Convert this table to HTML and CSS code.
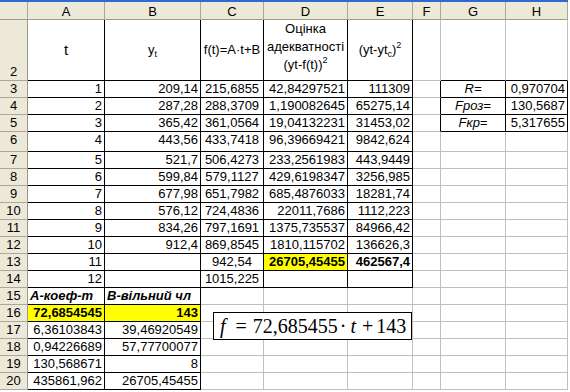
FILE: index.html
```html
<!DOCTYPE html>
<html lang="uk">
<head>
<meta charset="utf-8">
<title>Sheet</title>
<link rel="stylesheet" href="styles.css">
</head>
<body>
<div class="sheet">
  <div class="bar"></div>

  <div class="hd corner"></div>
  <div class="hd">A</div><div class="hd">B</div><div class="hd">C</div><div class="hd">D</div>
  <div class="hd">E</div><div class="hd">F</div><div class="hd">G</div><div class="hd">H</div>

  <div class="rh rh2">2</div>
  <div class="c k m r2"><span class="big">t</span></div>
  <div class="c k m r2"><span>y<sub>t</sub></span></div>
  <div class="c k m r2">f(t)=A·t+B</div>
  <div class="c k m r2"><span class="wrap">Оцінка<br>адекватності<br>(yt-f(t))<sup>2</sup></span></div>
  <div class="c k m r2"><span>(yt-yt<sub>c</sub>)<sup>2</sup></span></div>
  <div class="c"></div>
  <div class="c kb"></div>
  <div class="c kb"></div>

  <div class="rh">3</div>
  <div class="c k r">1</div><div class="c k r">209,14</div><div class="c k m">215,6855</div>
  <div class="c k r">42,84297521</div><div class="c k r">111309</div>
  <div class="c kr"></div><div class="c k m i">R=</div><div class="c k r">0,970704</div>

  <div class="rh">4</div>
  <div class="c k r">2</div><div class="c k r">287,28</div><div class="c k m">288,3709</div>
  <div class="c k r">1,190082645</div><div class="c k r">65275,14</div>
  <div class="c kr"></div><div class="c k m i">Fроз=</div><div class="c k r">130,5687</div>

  <div class="rh">5</div>
  <div class="c k r">3</div><div class="c k r">365,42</div><div class="c k m">361,0564</div>
  <div class="c k r">19,04132231</div><div class="c k r">31453,02</div>
  <div class="c kr"></div><div class="c k m i">Fкр=</div><div class="c k r">5,317655</div>

  <div class="rh">6</div>
  <div class="c k r">4</div><div class="c k r">443,56</div><div class="c k m">433,7418</div>
  <div class="c k r">96,39669421</div><div class="c k r">9842,624</div>
  <div class="c"></div><div class="c"></div><div class="c"></div>

  <div class="rh">7</div>
  <div class="c k r">5</div><div class="c k r">521,7</div><div class="c k m">506,4273</div>
  <div class="c k r">233,2561983</div><div class="c k r">443,9449</div>
  <div class="c"></div><div class="c"></div><div class="c"></div>

  <div class="rh">8</div>
  <div class="c k r">6</div><div class="c k r">599,84</div><div class="c k m">579,1127</div>
  <div class="c k r">429,6198347</div><div class="c k r">3256,985</div>
  <div class="c"></div><div class="c"></div><div class="c"></div>

  <div class="rh">9</div>
  <div class="c k r">7</div><div class="c k r">677,98</div><div class="c k m">651,7982</div>
  <div class="c k r">685,4876033</div><div class="c k r">18281,74</div>
  <div class="c"></div><div class="c"></div><div class="c"></div>

  <div class="rh">10</div>
  <div class="c k r">8</div><div class="c k r">576,12</div><div class="c k m">724,4836</div>
  <div class="c k r">22011,7686</div><div class="c k r">1112,223</div>
  <div class="c"></div><div class="c"></div><div class="c"></div>

  <div class="rh">11</div>
  <div class="c k r">9</div><div class="c k r">834,26</div><div class="c k m">797,1691</div>
  <div class="c k r">1375,735537</div><div class="c k r">84966,42</div>
  <div class="c"></div><div class="c"></div><div class="c"></div>

  <div class="rh">12</div>
  <div class="c k r">10</div><div class="c k r">912,4</div><div class="c k m">869,8545</div>
  <div class="c k r">1810,115702</div><div class="c k r">136626,3</div>
  <div class="c"></div><div class="c"></div><div class="c"></div>

  <div class="rh">13</div>
  <div class="c k r">11</div><div class="c k r"></div><div class="c k m">942,54</div>
  <div class="c k r b y">26705,45455</div><div class="c k r b">462567,4</div>
  <div class="c"></div><div class="c"></div><div class="c"></div>

  <div class="rh">14</div>
  <div class="c k r">12</div><div class="c k r"></div><div class="c k m">1015,225</div>
  <div class="c k"></div><div class="c k"></div>
  <div class="c"></div><div class="c"></div><div class="c"></div>

  <div class="rh">15</div>
  <div class="c k bi">A-коеф-т</div><div class="c k bi">B-вільний чл</div>
  <div class="c"></div><div class="c"></div><div class="c"></div>
  <div class="c"></div><div class="c"></div><div class="c"></div>

  <div class="rh">16</div>
  <div class="c k r b y">72,6854545</div><div class="c k r b y">143</div>
  <div class="c"></div><div class="c"></div><div class="c"></div>
  <div class="c"></div><div class="c"></div><div class="c"></div>

  <div class="rh">17</div>
  <div class="c k r">6,36103843</div><div class="c k r">39,46920549</div>
  <div class="c"></div><div class="c"></div><div class="c"></div>
  <div class="c"></div><div class="c"></div><div class="c"></div>

  <div class="rh">18</div>
  <div class="c k r">0,94226689</div><div class="c k r">57,77700077</div>
  <div class="c"></div><div class="c"></div><div class="c"></div>
  <div class="c"></div><div class="c"></div><div class="c"></div>

  <div class="rh">19</div>
  <div class="c k r">130,568671</div><div class="c k r">8</div>
  <div class="c"></div><div class="c"></div><div class="c"></div>
  <div class="c"></div><div class="c"></div><div class="c"></div>

  <div class="rh">20</div>
  <div class="c k r">435861,962</div><div class="c k r">26705,45455</div>
  <div class="c"></div><div class="c"></div><div class="c"></div>
  <div class="c"></div><div class="c"></div><div class="c"></div>

  <div class="formula">
    <span class="it">f</span><span class="eq">=</span><span class="num">72,685455</span><span class="dot">·</span><span class="it t">t</span><span class="plus">+</span><span class="num n2">143</span>
  </div>
</div>
</body>
</html>
```

FILE: styles.css
```css
html, body {
  margin: 0;
  padding: 0;
  background: #ffffff;
}

body {
  font-family: "Liberation Sans", Arial, sans-serif;
  font-size: 13px;
  color: #000;
}

.sheet {
  position: relative;
  display: grid;
  width: 568px;
  grid-template-columns: 28px 77px 96px 63px 84px 65px 28px 65px 62px;
  grid-template-rows: 2px 18px 61px 17px 17px 17px 20px repeat(14, 17px);
}

.bar {
  grid-column: 1 / -1;
  background: #3169d3;
}

.hd {
  box-sizing: border-box;
  background: #ece9d8;
  border-right: 1px solid #aca899;
  border-bottom: 1px solid #9d9a88;
  text-align: center;
  padding-top: 2px;
  line-height: 15px;
}

.rh {
  box-sizing: border-box;
  background: #ece9d8;
  border-right: 1px solid #9d9a88;
  border-bottom: 1px solid #aca899;
  text-align: center;
  line-height: 16px;
}

.rh2 {
  display: flex;
  align-items: flex-end;
  justify-content: center;
}

.c {
  box-sizing: border-box;
  display: flex;
  align-items: flex-start;
  justify-content: flex-start;
  padding: 0 2px;
  line-height: 16px;
  white-space: nowrap;
  overflow: hidden;
  border-right: 1px solid #c0c0c0;
  border-bottom: 1px solid #c0c0c0;
}

.k {
  border-right-color: #000;
  border-bottom-color: #000;
}

.kr {
  border-right-color: #000;
}

.kb {
  border-bottom-color: #000;
}

.r { justify-content: flex-end; }
.m { justify-content: center; }

.r2 {
  align-items: center;
}

.b { font-weight: bold; }
.i { font-style: italic; }
.bi { font-weight: bold; font-style: italic; }
.y { background: #ffff00; }

.big {
  font-size: 15px;
}

.wrap {
  display: block;
  text-align: center;
  line-height: 18px;
  white-space: nowrap;
  margin-bottom: 6px;
}

sub, sup {
  font-size: 9px;
  line-height: 0;
}

sub { vertical-align: -3px; }
sup { vertical-align: 6px; }

.formula {
  position: absolute;
  left: 213px;
  top: 312px;
  width: 199px;
  height: 28px;
  box-sizing: border-box;
  border: 1px solid #000;
  background: #fff;
  display: flex;
  align-items: center;
  padding-left: 6px;
  font-family: "Liberation Serif", "Times New Roman", serif;
  font-size: 20px;
  line-height: 26px;
  white-space: nowrap;
}

.it { font-style: italic; }
.eq { margin-left: 10px; }
.num { margin-left: 6px; }
.dot { margin-left: 2px; }
.t { margin-left: 4px; }
.plus { margin-left: 6px; }
.n2 { margin-left: 3px; }
```
